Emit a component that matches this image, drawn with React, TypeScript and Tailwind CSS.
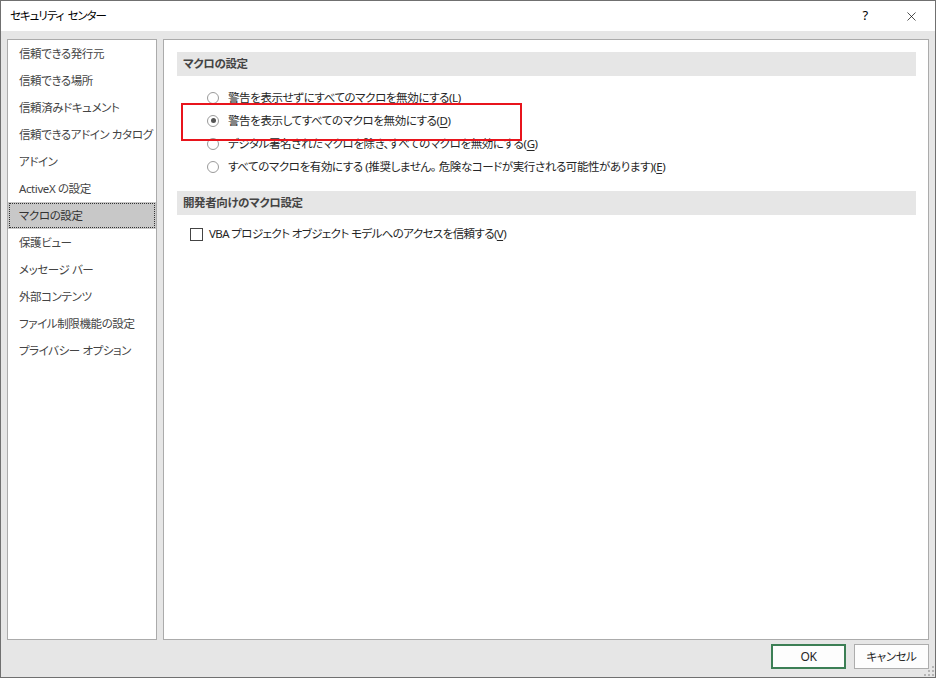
import { X } from 'lucide-react'

const navItems = [
  '信頼できる発行元',
  '信頼できる場所',
  '信頼済みドキュメント',
  '信頼できるアドイン カタログ',
  'アドイン',
  'ActiveX の設定',
  'マクロの設定',
  '保護ビュー',
  'メッセージ バー',
  '外部コンテンツ',
  'ファイル制限機能の設定',
  'プライバシー オプション',
]

const macroOptions = [
  { label: '警告を表示せずにすべてのマクロを無効にする', key: 'L' },
  { label: '警告を表示してすべてのマクロを無効にする', key: 'D' },
  { label: 'デジタル署名されたマクロを除き、すべてのマクロを無効にする', key: 'G' },
  { label: 'すべてのマクロを有効にする (推奨しません。 危険なコードが実行される可能性があります)', key: 'E' },
]

function Mnemonic({ k }: { k: string }) {
  return (
    <span>
      (<span className="underline underline-offset-2">{k}</span>)
    </span>
  )
}

function Radio({ checked }: { checked: boolean }) {
  return (
    <span className="w-[12px] h-[12px] rounded-full border border-[#9a9a9a] bg-white flex items-center justify-center shrink-0">
      {checked && <span className="w-[5px] h-[5px] rounded-full bg-[#555]" />}
    </span>
  )
}

function SectionHeader({ children }: { children: string }) {
  return (
    <div className="h-[24px] bg-[#e6e6e6] flex items-center pl-[6px] font-semibold text-[#444]">
      {children}
    </div>
  )
}

export default function App() {
  const selected = 6
  const checkedOption = 1

  return (
    <div className="w-[936px] h-[678px] flex flex-col border border-[#707070] bg-[#e6e6e6] font-['Noto_Sans','Noto_Sans_CJK_JP',sans-serif] [font-feature-settings:'palt'] text-[11.5px] tracking-[-0.4px] overflow-hidden select-none">
      {/* Title bar */}
      <div className="h-[30px] bg-white flex items-center shrink-0">
        <span className="ml-[9px] text-black tracking-[-1px]">セキュリティ&nbsp;&nbsp;センター</span>
        <div className="ml-auto flex items-center">
          <span className="w-[46px] text-center text-[13px] text-black">?</span>
          <span className="w-[46px] flex justify-center text-black mr-[1px]">
            <X size={15} strokeWidth={1.1} />
          </span>
        </div>
      </div>

      {/* Body */}
      <div className="flex-1 flex flex-col px-[6px] pt-[8px] relative">
        <div className="flex gap-[6px] h-[601px]">
          {/* Left nav */}
          <div className="w-[150px] bg-white border border-[#ababab] flex flex-col">
            {navItems.map((item, i) => (
              <div
                key={item}
                className={`h-[27px] shrink-0 flex items-center whitespace-nowrap ${i === selected ? 'bg-[#c8c8c8] p-[1px]' : ''}`}
              >
                {i === selected ? (
                  <div className="w-full h-full border border-dotted border-[#333] flex items-center pl-[9px] text-[#333]">
                    {item}
                  </div>
                ) : (
                  <span className="pl-[11px] text-[#444]">{item}</span>
                )}
              </div>
            ))}
          </div>

          {/* Right content */}
          <div className="flex-1 bg-white border border-[#ababab] relative px-[13px] pr-[12px] pt-[12px]">
            <SectionHeader>マクロの設定</SectionHeader>
            <div className="flex flex-col pt-[10px] pb-[13px]">
              {macroOptions.map((o, i) => (
                <div key={o.key} className="h-[23px] flex items-center pl-[30px] gap-[9px] text-[#262626]">
                  <Radio checked={i === checkedOption} />
                  <span className="whitespace-nowrap">
                    {o.label}
                    <Mnemonic k={o.key} />
                  </span>
                </div>
              ))}
            </div>

            <SectionHeader>開発者向けのマクロ設定</SectionHeader>
            <div className="h-[38px] flex items-center pl-[13px] gap-[6px] text-[#262626]">
              <span className="w-[13px] h-[13px] border border-[#444] bg-white shrink-0" />
              <span className="whitespace-nowrap tracking-[-0.6px]">
                VBA プロジェクト オブジェクト モデルへのアクセスを信頼する
                <Mnemonic k="V" />
              </span>
            </div>

            {/* Annotation */}
            <div className="absolute left-[17px] top-[63px] w-[341px] h-[38px] border-2 border-[#e8141c] pointer-events-none" />
          </div>
        </div>

        {/* Buttons */}
        <div className="flex justify-end gap-[8px] mt-[4px]">
          <button className="w-[75px] h-[25px] bg-[#fdfdfd] border-2 border-[#3c7f55] text-[12px] text-[#262626]">
            OK
          </button>
          <button className="w-[75px] h-[25px] bg-[#fdfdfd] border border-[#adadad] text-[#262626]">
            キャンセル
          </button>
        </div>

        {/* Resize grip */}
        <svg className="absolute right-[1px] bottom-[1px]" width="10" height="10" viewBox="0 0 10 10">
          <rect x="8" y="0" width="2" height="2" fill="#b5b5b5" />
          <rect x="4" y="4" width="2" height="2" fill="#b5b5b5" />
          <rect x="8" y="4" width="2" height="2" fill="#b5b5b5" />
          <rect x="0" y="8" width="2" height="2" fill="#b5b5b5" />
          <rect x="4" y="8" width="2" height="2" fill="#b5b5b5" />
          <rect x="8" y="8" width="2" height="2" fill="#b5b5b5" />
        </svg>
      </div>
    </div>
  )
}
